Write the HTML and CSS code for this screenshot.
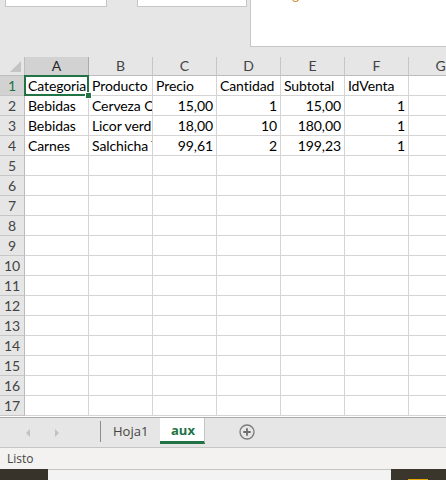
FILE: index.html
```html
<!DOCTYPE html>
<html>
<head>
<meta charset="utf-8">
<link rel="stylesheet" href="styles.css">
</head>
<body>
<div class="app">
  <div class="ribbon">
    <div class="box box1"></div>
    <div class="box box2"></div>
    <div class="box box3"><span class="dot"></span></div>
  </div>
  <div class="sheet">
    <div class="corner"><span class="tri"></span></div>
    <div class="ch sel">A</div><div class="ch">B</div><div class="ch">C</div><div class="ch">D</div><div class="ch">E</div><div class="ch">F</div><div class="ch">G</div>

    <div class="rh sel">1</div>
    <div class="c active">Categoria<span class="handle"></span></div><div class="c">Producto</div><div class="c">Precio</div><div class="c">Cantidad</div><div class="c">Subtotal</div><div class="c">IdVenta</div><div class="c"></div>

    <div class="rh">2</div>
    <div class="c">Bebidas</div><div class="c">Cerveza O</div><div class="c n">15,00</div><div class="c n">1</div><div class="c n">15,00</div><div class="c n">1</div><div class="c"></div>

    <div class="rh">3</div>
    <div class="c">Bebidas</div><div class="c">Licor verd</div><div class="c n">18,00</div><div class="c n">10</div><div class="c n">180,00</div><div class="c n">1</div><div class="c"></div>

    <div class="rh">4</div>
    <div class="c">Carnes</div><div class="c">Salchicha T</div><div class="c n">99,61</div><div class="c n">2</div><div class="c n">199,23</div><div class="c n">1</div><div class="c"></div>

    <div class="rh">5</div><div class="c"></div><div class="c"></div><div class="c"></div><div class="c"></div><div class="c"></div><div class="c"></div><div class="c"></div>
    <div class="rh">6</div><div class="c"></div><div class="c"></div><div class="c"></div><div class="c"></div><div class="c"></div><div class="c"></div><div class="c"></div>
    <div class="rh">7</div><div class="c"></div><div class="c"></div><div class="c"></div><div class="c"></div><div class="c"></div><div class="c"></div><div class="c"></div>
    <div class="rh">8</div><div class="c"></div><div class="c"></div><div class="c"></div><div class="c"></div><div class="c"></div><div class="c"></div><div class="c"></div>
    <div class="rh">9</div><div class="c"></div><div class="c"></div><div class="c"></div><div class="c"></div><div class="c"></div><div class="c"></div><div class="c"></div>
    <div class="rh">10</div><div class="c"></div><div class="c"></div><div class="c"></div><div class="c"></div><div class="c"></div><div class="c"></div><div class="c"></div>
    <div class="rh">11</div><div class="c"></div><div class="c"></div><div class="c"></div><div class="c"></div><div class="c"></div><div class="c"></div><div class="c"></div>
    <div class="rh">12</div><div class="c"></div><div class="c"></div><div class="c"></div><div class="c"></div><div class="c"></div><div class="c"></div><div class="c"></div>
    <div class="rh">13</div><div class="c"></div><div class="c"></div><div class="c"></div><div class="c"></div><div class="c"></div><div class="c"></div><div class="c"></div>
    <div class="rh">14</div><div class="c"></div><div class="c"></div><div class="c"></div><div class="c"></div><div class="c"></div><div class="c"></div><div class="c"></div>
    <div class="rh">15</div><div class="c"></div><div class="c"></div><div class="c"></div><div class="c"></div><div class="c"></div><div class="c"></div><div class="c"></div>
    <div class="rh">16</div><div class="c"></div><div class="c"></div><div class="c"></div><div class="c"></div><div class="c"></div><div class="c"></div><div class="c"></div>
    <div class="rh">17</div><div class="c"></div><div class="c"></div><div class="c"></div><div class="c"></div><div class="c"></div><div class="c"></div><div class="c"></div>
  </div>
  <div class="tabbar">
    <div class="navs">
      <span class="arrow left"></span>
      <span class="arrow right"></span>
    </div>
    <div class="sep"></div>
    <div class="tab">Hoja1</div>
    <div class="tab active">aux</div>
    <div class="add">
      <svg width="16" height="16" viewBox="0 0 16 16"><circle cx="8" cy="8" r="7" fill="none" stroke="#7b7b7b" stroke-width="1.3"/><path d="M8 4.3V11.7M4.3 8H11.7" stroke="#6e6e6e" stroke-width="1.8"/></svg>
    </div>
  </div>
  <div class="status">Listo</div>
  <div class="taskbar">
    <div class="tb-left"><span class="tb-mark"></span></div>
    <div class="tb-mid"><span class="tb-mark2"></span></div>
    <div class="tb-right"><span class="folder"></span></div>
  </div>
</div>
</body>
</html>
```

FILE: styles.css
```css
html, body {
  margin: 0;
  padding: 0;
}
body {
  width: 446px;
  height: 480px;
  overflow: hidden;
  background: #ffffff;
  font-family: Lato, "Open Sans", "Liberation Sans", sans-serif;
}
.app {
  width: 446px;
  height: 480px;
  display: flex;
  flex-direction: column;
  overflow: hidden;
}
.ribbon {
  height: 57px;
  flex: none;
  background: #e6e6e6;
  display: flex;
  align-items: flex-start;
}
.box {
  background: #ffffff;
  border: 1px solid #c6c6c6;
  border-top: none;
  box-sizing: border-box;
}
.box1 {
  margin-left: 5px;
  width: 102px;
  height: 7px;
}
.box2 {
  margin-left: 30px;
  width: 110px;
  height: 7px;
}
.box3 {
  margin-left: 3px;
  flex: 1;
  height: 47px;
  border-right: none;
  position: relative;
}
.dot {
  position: absolute;
  left: 41px;
  top: -3px;
  width: 5px;
  height: 4px;
  border: 1px solid #d08a30;
  border-top: none;
  border-radius: 0 0 4px 4px;
}
.sheet {
  flex: none;
  height: 360px;
  display: grid;
  grid-template-columns: 25px repeat(7, 64px);
  grid-template-rows: 19px repeat(17, 20px);
  overflow: hidden;
  width: 473px;
}
.corner {
  background: #e6e6e6;
  border-right: 1px solid #bdbdbd;
  border-bottom: 1px solid #bdbdbd;
  box-sizing: border-box;
  position: relative;
}
.tri {
  position: absolute;
  right: 3px;
  bottom: 3px;
  width: 0;
  height: 0;
  border-left: 11px solid transparent;
  border-bottom: 11px solid #c4c4c4;
}
.ch {
  background: #e6e6e6;
  border-right: 1px solid #c6c6c6;
  border-bottom: 1px solid #bdbdbd;
  box-sizing: border-box;
  font-size: 14px;
  color: #444444;
  text-align: center;
  line-height: 18px;
}
.ch.sel {
  background: #d2d2d2;
  color: #262626;
  border-right-color: #ababab;
}
.rh {
  background: #e6e6e6;
  border-right: 1px solid #bdbdbd;
  border-bottom: 1px solid #c6c6c6;
  box-sizing: border-box;
  font-size: 14px;
  color: #444444;
  text-align: center;
  line-height: 20px;
}
.rh.sel {
  background: #d2d2d2;
  color: #217346;
}
.c {
  border-right: 1px solid #d4d4d4;
  border-bottom: 1px solid #d4d4d4;
  box-sizing: border-box;
  font-size: 14px;
  letter-spacing: -0.1px;
  color: #000000;
  line-height: 20px;
  padding: 0 3px;
  white-space: nowrap;
  overflow: hidden;
}
.c.n {
  text-align: right;
}
.c.active {
  overflow: visible;
  position: relative;
  z-index: 2;
  padding-left: 3px;
}
.c.active::before {
  content: "";
  position: absolute;
  left: -1px;
  top: -1px;
  right: -1px;
  bottom: -1px;
  border: 2px solid #217346;
  pointer-events: none;
}
.handle {
  position: absolute;
  right: -4px;
  bottom: -4px;
  width: 5px;
  height: 5px;
  background: #217346;
  border: 1px solid #ffffff;
}
.tabbar {
  flex: none;
  height: 29px;
  background: #e6e6e6;
  border-top: 1px solid #ababab;
  border-bottom: 1px solid #c6c6c6;
  box-sizing: content-box;
  display: flex;
  align-items: stretch;
}
.navs {
  width: 100px;
  display: flex;
  align-items: center;
  gap: 25px;
  padding-left: 26px;
  box-sizing: border-box;
}
.arrow {
  width: 0;
  height: 0;
  border-top: 4px solid transparent;
  border-bottom: 4px solid transparent;
}
.arrow.left {
  border-right: 4px solid #c2c2c2;
}
.arrow.right {
  border-left: 4px solid #c2c2c2;
}
.sep {
  width: 1px;
  background: #8c8c8c;
  margin: 3px 0 5px 0;
}
.tab {
  font-family: "Open Sans", "Liberation Sans", sans-serif;
  font-size: 13px;
  color: #444444;
  padding: 0 12px 0 12px;
  line-height: 27px;
  width: 59px;
  box-sizing: border-box;
}
.tab.active {
  width: 45px;
  background: #ffffff;
  color: #217346;
  font-weight: bold;
  padding: 0 0 0 11px;
  border-bottom: 3px solid #217346;
  height: 26px;
  line-height: 24px;
  border-right: 1px solid #c6c6c6;
}
.add {
  margin-left: 34px;
  display: flex;
  align-items: center;
}
.add svg {
  display: block;
  margin-top: -2px;
}
.status {
  flex: none;
  height: 21px;
  background: #f3f2f1;
  font-family: "Open Sans", "Liberation Sans", sans-serif;
  font-size: 12px;
  color: #444444;
  line-height: 21px;
  padding-left: 7px;
}
.taskbar {
  flex: none;
  height: 13px;
  display: flex;
}
.tb-left {
  width: 48px;
  background: #38332a;
  position: relative;
}
.tb-mark {
  position: absolute;
  left: 28px;
  top: 11px;
  width: 4px;
  height: 2px;
  background: #ffffff;
}
.tb-mid {
  flex: 1;
  background: #f3f3f3;
  border-top: 1px solid #c4c4c4;
  position: relative;
}
.tb-mark2 {
  position: absolute;
  left: 20px;
  top: 10px;
  width: 4px;
  height: 2px;
  background: #333333;
}
.tb-right {
  width: 55px;
  background: #3b362c;
  position: relative;
}
.folder {
  position: absolute;
  left: 17px;
  top: 10px;
  width: 20px;
  height: 3px;
  background: #e8a800;
}
```
